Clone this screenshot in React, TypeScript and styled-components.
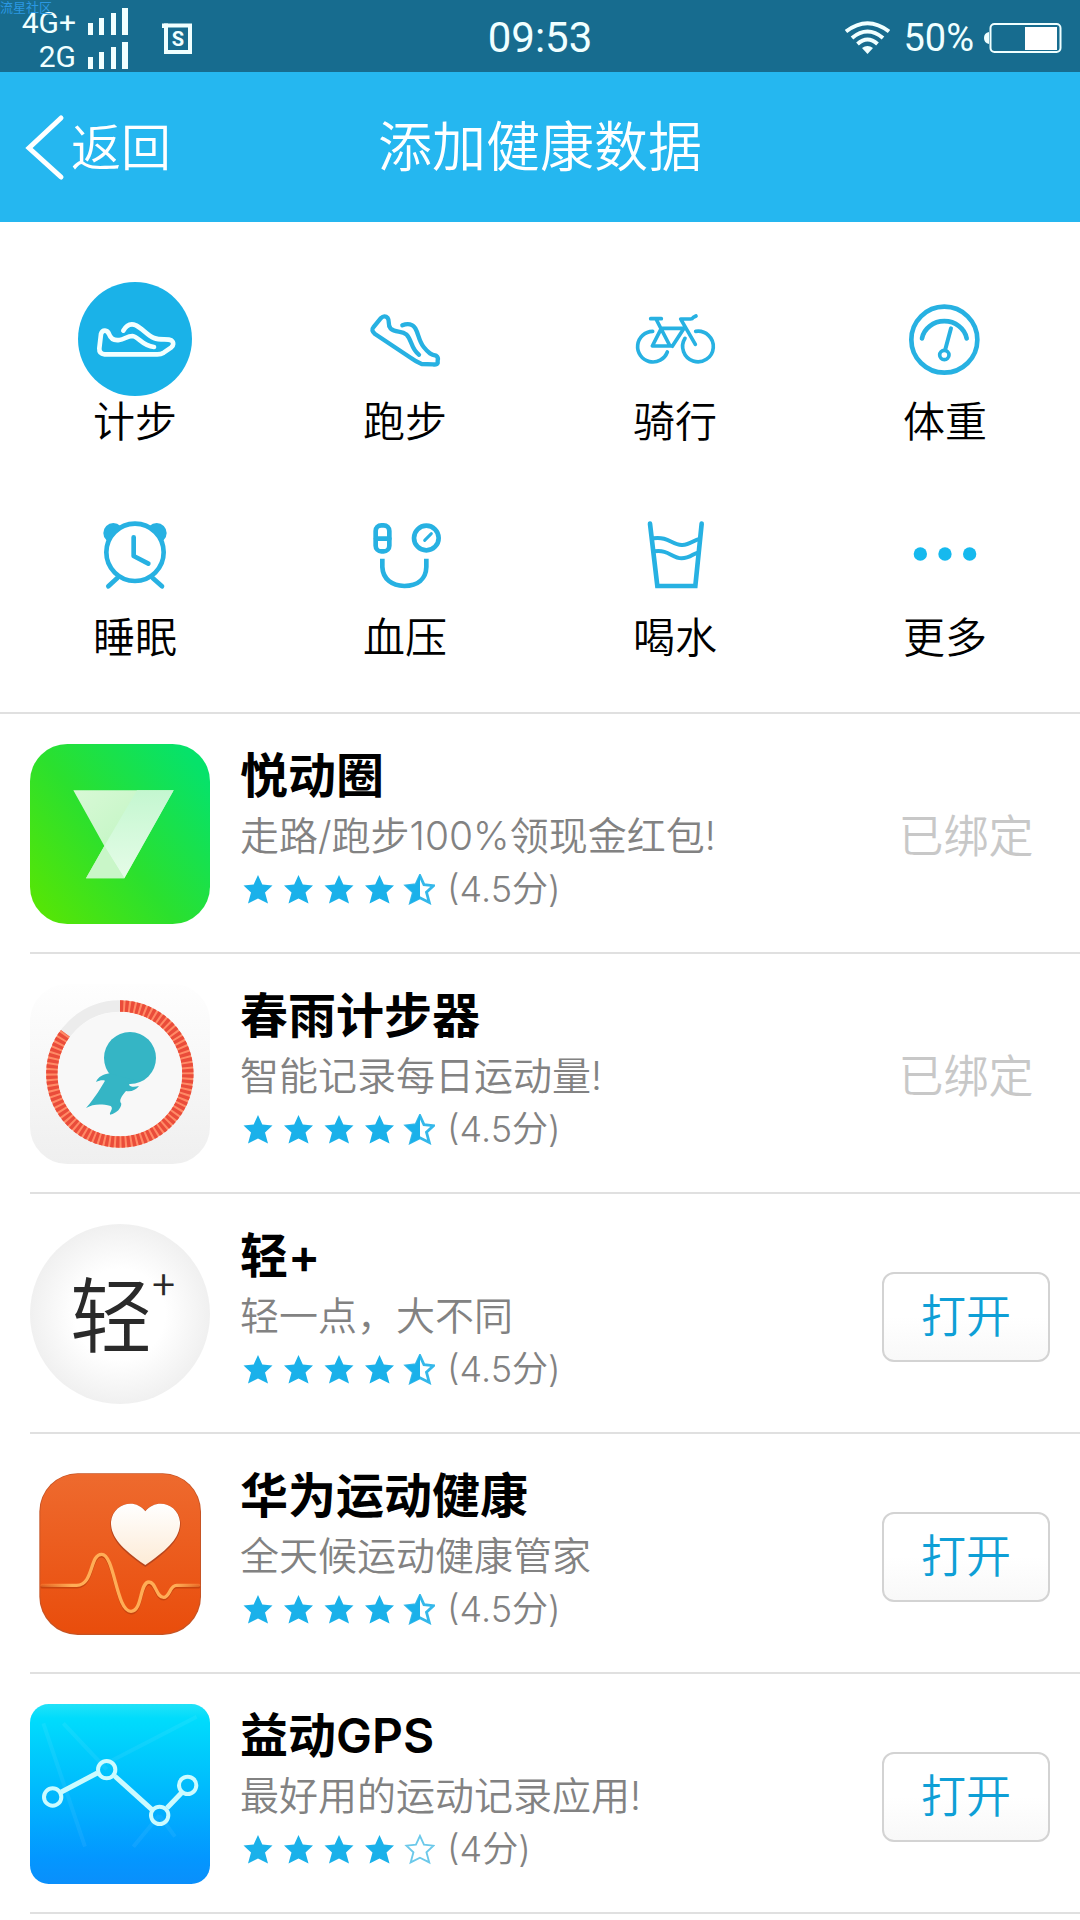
import React from "react";
import styled, { createGlobalStyle } from "styled-components";

const GlobalStyle = createGlobalStyle`
  * { box-sizing: border-box; }
  body {
    margin: 0;
    background: #fff;
    font-family: Inter, "Noto Sans CJK SC", sans-serif;
    font-weight: 350;
    color: #000;
  }
  button { font: inherit; cursor: pointer; }
`;

const Page = styled.div`
  position: relative;
  display: flex;
  flex-direction: column;
`;

const Watermark = styled.span`
  position: absolute;
  top: 0;
  left: 0;
  font-size: 13px;
  line-height: 14px;
  font-weight: 400;
  color: #2b98e2;
`;

const StatusBar = styled.div`
  display: grid;
  grid-template-columns: 1fr auto 1fr;
  align-items: center;
  height: 72px;
  padding: 3px 18px 0;
  background: #176c8f;
  color: #f0ffff;
  font-family: Roboto, sans-serif;
  font-weight: 400;
`;

const StatusSide = styled.div<{ $end?: boolean }>`
  display: flex;
  align-items: center;
  justify-content: ${(p) => (p.$end ? "flex-end" : "flex-start")};
`;

const Networks = styled.div`
  display: grid;
  grid-template-columns: 58px 40px;
  column-gap: 12px;
  row-gap: 4px;
  align-items: end;
  justify-items: end;
  margin-right: 34px;
  padding-top: 4px;
  font-size: 30px;
  line-height: 30px;
`;

const Clock = styled.time`
  font-size: 42px;
  line-height: 48px;
`;

const Percent = styled.span`
  margin: 0 10px 0 13px;
  font-size: 38px;
  line-height: 48px;
`;

const Header = styled.header`
  display: grid;
  grid-template-columns: 1fr auto 1fr;
  align-items: center;
  height: 150px;
  padding: 2px 24px 0;
  background: #25b7f0;
  color: #fff;
`;

const BackButton = styled.button`
  display: flex;
  align-items: center;
  gap: 5px;
  justify-self: start;
  padding: 0;
  border: 0;
  background: none;
  color: inherit;
  font-size: 50px;
  line-height: 72px;
`;

const Title = styled.h1`
  margin: 0;
  font-size: 54px;
  line-height: 72px;
  font-weight: inherit;
`;

const Categories = styled.nav`
  display: grid;
  grid-template-columns: repeat(4, 1fr);
  row-gap: 50px;
  padding: 60px 0 48px;
  border-bottom: 2px solid #e0e0e0;
`;

const Category = styled.button`
  display: flex;
  flex-direction: column;
  align-items: center;
  padding: 0;
  border: 0;
  background: none;
  color: #000;
  font-size: 42px;
  line-height: 52px;
`;

const CategoryDisc = styled.span<{ $active?: boolean }>`
  display: block;
  width: 114px;
  height: 114px;
  border-radius: 50%;
  background: ${(p) => (p.$active ? "#1ab2e8" : "transparent")};
  color: ${(p) => (p.$active ? "#f2ffff" : "#27b1e2")};

  svg {
    display: block;
    width: 100%;
    height: 100%;
    fill: none;
    stroke: currentColor;
    stroke-width: 14;
    stroke-linecap: round;
    stroke-linejoin: round;
  }
`;

const AppList = styled.ul`
  margin: 0;
  padding: 0;
  list-style: none;
`;

const AppRow = styled.li`
  display: flex;
  align-items: flex-start;
  gap: 30px;
  margin-left: 30px;
  padding: 30px 30px 22px 0;
  border-bottom: 2px solid #e0e0e0;
`;

const AppIcon = styled.svg`
  display: block;
  flex: none;
  width: 180px;
  height: 180px;
`;

const AppInfo = styled.div`
  flex: 1;
  min-width: 0;
  min-height: 186px;
`;

const AppName = styled.h2`
  margin: 0;
  font-size: 48px;
  line-height: 64px;
  font-weight: 600;
`;

const AppText = styled.p`
  margin: 0;
  font-size: 39px;
  line-height: 56px;
  color: #828282;
`;

const Rating = styled.div`
  display: flex;
  align-items: center;
  gap: 12px;
  padding-left: 3px;
  font-size: 36px;
  line-height: 50px;
  color: #828282;
`;

const Action = styled.div`
  display: flex;
  justify-content: center;
  align-self: center;
  width: 168px;
  font-size: 45px;
  line-height: 64px;
  color: #c8c8c8;
`;

const OpenButton = styled.button`
  width: 100%;
  height: 90px;
  padding: 0;
  border: 2px solid #d3d3d3;
  border-radius: 12px;
  background: linear-gradient(#fff 50%, #f8f8f8);
  color: #0e9fd6;
`;

const SignalBars = () => (
  <svg width="40" height="30" viewBox="0 0 40 30" fill="#f0ffff" aria-hidden="true">
    <rect x="0" y="15" width="5" height="12" />
    <rect x="11" y="10" width="5" height="17" />
    <rect x="23" y="5" width="5" height="22" />
    <rect x="34" y="0" width="6" height="27" />
  </svg>
);

const SimIcon = () => (
  <svg width="30" height="32" viewBox="0 0 30 32" aria-hidden="true">
    <path d="M4 3.5H28V30H4Z" fill="none" stroke="#f0ffff" strokeWidth="4" />
    <path d="M0 1.5H6V6H0Z" fill="#f0ffff" />
    <text x="16" y="24" textAnchor="middle" fill="#f0ffff" fontSize="20" fontWeight="700" fontFamily="Roboto, sans-serif">S</text>
  </svg>
);

const WifiIcon = () => (
  <svg width="45" height="33" viewBox="0 0 45 33" fill="none" stroke="#f0ffff" strokeWidth="4" aria-hidden="true">
    <path d="M1 10.5Q22.500 -6 44 10.500" />
    <path d="M7 17Q22.500 4 38 17" />
    <path d="M12.500 23Q22.500 14 32.500 23" />
    <path d="M17 27Q22.500 23 28 27L22.500 33Z" fill="#f0ffff" stroke="none" />
  </svg>
);

const BatteryIcon = () => (
  <svg width="78" height="30" viewBox="0 0 78 30" aria-hidden="true">
    <path d="M5 9Q0 10 0 15T5 21Z" fill="#f0ffff" />
    <rect x="6.500" y="1" width="70" height="28" rx="4" fill="none" stroke="#f0ffff" strokeWidth="2" />
    <rect x="41" y="4" width="32" height="23" fill="#fff" />
  </svg>
);

const BackIcon = () => (
  <svg width="42" height="68" viewBox="0 0 42 68" fill="none" stroke="#fff" strokeWidth="5" strokeLinecap="round" aria-hidden="true">
    <path d="M37 4L5 34L37 63" />
  </svg>
);

const categories = [
  {
    label: "计步",
    active: true,
    view: "54 66 342 342",
    art: (
      <>
        <path d="M190 212C200 194 214 190 228 196C248 206 262 226 282 234C302 242 322 235 334 241C342 247 341 257 333 263L311 278Q303 283 292 283H134Q117 281 118 265L123 222C128 207 142 210 147 222C152 236 164 242 178 240C193 239 201 228 217 228C238 231 245 257 282 261" />
      </>
    ),
  },
  {
    label: "跑步",
    view: "864 66 342 342",
    art: (
      <path
        strokeWidth="13"
        d="M1027 196C1043 189 1058 192 1066 205C1076 222 1076 242 1091 261C1106 280 1114 284 1128 287Q1136 292 1133 302V309Q1130 315 1119 313L1085 312Q1068 305 1053 294L945 222Q932 211 940 202L962 175Q974 164 983 174C991 185 981 193 992 206C1007 219 1024 211 1040 224C1056 240 1053 267 1077 284"
      />
    ),
  },
  {
    label: "骑行",
    view: "174 66 342 342",
    art: (
      <g strokeWidth="11">
        <path d="M278 214A46 46 0 1 0 322 276" />
        <path d="M375 235A46 46 0 1 0 407 214" />
        <path d="M272 176H304M288 177L330 258H277L304 205H372L337 259M362 177H392Q397 177 400 172L408 168M363 179L406 253" />
      </g>
    ),
  },
  {
    label: "体重",
    view: "984 66 342 342",
    art: (
      <>
        <circle cx="1153" cy="239" r="99" />
        <path d="M1086 235A68 62 0 0 1 1220 235" />
        <circle cx="1153" cy="285" r="14" strokeWidth="11" />
        <path d="M1156 268L1173 205" strokeWidth="12" />
      </>
    ),
  },
  {
    label: "睡眠",
    view: "54 24 342 342",
    art: (
      <>
        <g fill="currentColor" stroke="none">
          <circle cx="160" cy="129" r="30" />
          <circle cx="290" cy="129" r="30" />
        </g>
        <circle cx="225" cy="187" r="86" fill="#fff" />
        <path d="M221 142V198L265 221M172 264L145 289M278 264L306 289" />
      </>
    ),
  },
  {
    label: "血压",
    view: "864 24 342 342",
    art: (
      <>
        <rect x="947" y="106" width="41" height="78" rx="17" />
        <path d="M948 146H988" />
        <circle cx="1099" cy="144" r="37" />
        <path d="M1094 151L1114 131" strokeWidth="9" />
        <path d="M967 206V231C969 268 996 287 1033 288C1073 287 1098 267 1099 231V206" strokeLinecap="butt" />
      </>
    ),
  },
  {
    label: "喝水",
    view: "174 24 342 342",
    art: (
      <>
        <path d="M270 101L292 288H406L425 101" strokeLinejoin="miter" />
        <path d="M280 145C325 139 335 164 365 165C390 166 401 150 418 147M283 184C326 178 335 204 365 205C389 205 401 190 414 188" strokeWidth="12" />
      </>
    ),
  },
  {
    label: "更多",
    view: "984 24 342 342",
    art: (
      <g fill="#16b9ee" stroke="none">
        <circle cx="1081" cy="192" r="20" />
        <circle cx="1155" cy="192" r="20" />
        <circle cx="1229" cy="192" r="20" />
      </g>
    ),
  },
];

const YuedongIcon = () => (
  <AppIcon viewBox="90 72 540 540" aria-hidden="true">
    <defs>
      <linearGradient id="yd-bg" x1="0" y1="1" x2="1" y2="0.200">
        <stop offset="0" stopColor="#5ce600" />
        <stop offset="0.500" stopColor="#2be02e" />
        <stop offset="1" stopColor="#06e26a" />
      </linearGradient>
      <linearGradient id="yd-wing" x1="0" y1="0" x2="1" y2="1">
        <stop offset="0" stopColor="#d8f9d6" />
        <stop offset="1" stopColor="#b5f3b8" />
      </linearGradient>
      <linearGradient id="yd-blade" x1="0" y1="0" x2="0" y2="1">
        <stop offset="0" stopColor="#c4f7d0" />
        <stop offset="1" stopColor="#e6fce8" />
      </linearGradient>
    </defs>
    <rect x="90" y="72" width="540" height="540" rx="112" fill="url(#yd-bg)" />
    <path d="M220 211H521L373 475H258L313 378Z" fill="url(#yd-wing)" />
    <path d="M411 211H521L373 475L313 378Z" fill="url(#yd-blade)" />
    <path d="M313 378L373 475H258Z" fill="#c9f6c8" />
  </AppIcon>
);

const ChunyuIcon = () => (
  <AppIcon viewBox="90 72 540 540" aria-hidden="true">
    <defs>
      <linearGradient id="cy-bg" x1="0" y1="0" x2="0" y2="1">
        <stop offset="0" stopColor="#fefefe" />
        <stop offset="1" stopColor="#efefef" />
      </linearGradient>
    </defs>
    <rect x="90" y="72" width="540" height="540" rx="112" fill="url(#cy-bg)" />
    <g fill="none" strokeWidth="34">
      <circle cx="360" cy="342" r="204" stroke="#ececec" />
      <path d="M360 138A204 204 0 1 1 196 220" stroke="#ff8a66" />
      <path d="M360 138A204 204 0 1 1 196 220" stroke="#ea4c3a" strokeDasharray="10 6" />
    </g>
    <circle cx="360" cy="342" r="186" fill="#f8f8f8" />
    <g fill="#35b5c5">
      <circle cx="390" cy="294" r="78" />
      <path d="M328 340C310 343 295 350 288 366C298 361 308 359 315 362C302 383 290 407 258 444C280 432 302 431 332 438C342 447 328 455 330 464C353 458 363 444 364 431C355 421 366 408 378 393C394 396 408 390 417 378C402 382 391 381 387 374L400 360Z" />
    </g>
  </AppIcon>
);

const QingIcon = () => (
  <AppIcon viewBox="0 0 180 180" aria-hidden="true">
    <defs>
      <radialGradient id="qj-bg">
        <stop offset="0.500" stopColor="#ffffff" />
        <stop offset="1" stopColor="#f0f0f0" />
      </radialGradient>
    </defs>
    <circle cx="90" cy="90" r="90" fill="url(#qj-bg)" />
    <g fill="#2a2a2a" fontFamily="'Noto Sans CJK SC', sans-serif">
      <text x="40" y="122" fontSize="82">轻</text>
      <text x="122" y="76" fontSize="42">+</text>
    </g>
  </AppIcon>
);

const HuaweiIcon = () => (
  <AppIcon viewBox="90 72 540 540" aria-hidden="true">
    <defs>
      <linearGradient id="hw-bg" x1="0" y1="0" x2="0" y2="1">
        <stop offset="0" stopColor="#ee6a2e" />
        <stop offset="1" stopColor="#e94d0c" />
      </linearGradient>
      <linearGradient id="hw-heart" x1="0" y1="0" x2="0" y2="1">
        <stop offset="0" stopColor="#ffffff" />
        <stop offset="1" stopColor="#fdebd6" />
      </linearGradient>
      <linearGradient id="hw-line" gradientUnits="userSpaceOnUse" x1="120" y1="0" x2="600" y2="0">
        <stop offset="0" stopColor="#ffad56" stopOpacity="0.200" />
        <stop offset="0.200" stopColor="#ffad56" />
        <stop offset="0.850" stopColor="#ffad56" />
        <stop offset="1" stopColor="#ffad56" stopOpacity="0.300" />
      </linearGradient>
    </defs>
    <rect x="118" y="100" width="485" height="485" rx="115" fill="#c65323" />
    <rect x="121" y="102" width="479" height="479" rx="112" fill="url(#hw-bg)" />
    <path d="M436 381C355 326 330 290 331 248C335 192 404 172 436 212C470 172 538 192 542 248C543 291 516 327 436 381Z" fill="#b8461d" />
    <path d="M436 375C358 322 332 286 333 246C338 190 406 172 436 214C468 172 535 190 540 246C541 288 514 322 436 375Z" fill="url(#hw-heart)" />
    <g fill="none" strokeLinecap="round">
      <path d="M126 441H230C282 440 268 348 305 348C344 348 348 519 393 519C428 519 418 431 447 431C468 431 468 477 491 477C510 477 508 441 530 441H596" stroke="#c8440f" strokeWidth="9" />
      <path d="M126 436H230C282 435 268 343 305 343C344 343 348 514 393 514C428 514 418 426 447 426C468 426 468 472 491 472C510 472 508 436 530 436H596" stroke="url(#hw-line)" strokeWidth="10" />
    </g>
  </AppIcon>
);

const YidongIcon = () => (
  <AppIcon viewBox="90 72 540 540" aria-hidden="true">
    <defs>
      <linearGradient id="gps-bg" x1="0" y1="0" x2="0" y2="1">
        <stop offset="0" stopColor="#22e2f8" />
        <stop offset="0.080" stopColor="#00dcfc" />
        <stop offset="0.500" stopColor="#00b8fd" />
        <stop offset="0.850" stopColor="#0397ff" />
        <stop offset="1" stopColor="#0a8ffb" />
      </linearGradient>
    </defs>
    <rect x="90" y="72" width="540" height="540" rx="56" fill="url(#gps-bg)" />
    <path d="M130 130L255 500M190 130L320 268M320 250L590 110M478 406L400 500M478 406L525 470" stroke="#fff" strokeOpacity="0.060" strokeWidth="12" />
    <g fill="none" stroke="#ccfbff">
      <path d="M184 336L292 279M344 288L455 388M501 384L545 338" strokeWidth="15" />
      <g strokeWidth="12">
        <circle cx="158" cy="351" r="26" />
        <circle cx="320" cy="269" r="26" />
        <circle cx="479" cy="406" r="26" />
        <circle cx="563" cy="316" r="26" />
      </g>
    </g>
  </AppIcon>
);

const STAR = "M15 1L19.300 10.400L29.500 11.500L22 18.500L25 29.500L15 24.500L5 29.500L8 18.500L0.500 11.500L10.700 10.400Z";
const HALF_STAR = "M15 1V24.500L5 29.500L8 18.500L0.500 11.500L10.700 10.400Z";

const Stars = ({ score }: { score: number }) => (
  <svg width="192" height="31" viewBox="0 0 192 31" role="img" aria-label={`${score}`}>
    {[0, 1, 2, 3, 4].map((i) => {
      const full = score >= i + 1;
      const half = !full && score > i;
      return (
        <g key={i} transform={`translate(${i * 40.5} 0)`}>
          {full ? (
            <path d={STAR} fill="#1ab1ea" />
          ) : (
            <>
              <path
                d={STAR}
                transform="translate(1 1) scale(0.930)"
                fill="none"
                stroke={half ? "#35b8ea" : "#6cc9ea"}
                strokeWidth={half ? 3 : 2}
              />
              {half && <path d={HALF_STAR} fill="#1ab1ea" />}
            </>
          )}
        </g>
      );
    })}
  </svg>
);

const apps = [
  { name: "悦动圈", text: "走路/跑步100%领现金红包!", score: 4.5, bound: true, Icon: YuedongIcon },
  { name: "春雨计步器", text: "智能记录每日运动量!", score: 4.5, bound: true, Icon: ChunyuIcon },
  { name: "轻+", text: "轻一点，大不同", score: 4.5, bound: false, Icon: QingIcon },
  { name: "华为运动健康", text: "全天候运动健康管家", score: 4.5, bound: false, Icon: HuaweiIcon },
  { name: "益动GPS", text: "最好用的运动记录应用!", score: 4, bound: false, Icon: YidongIcon },
];

export default function App() {
  return (
    <Page lang="zh-CN">
      <GlobalStyle />
      <StatusBar>
        <StatusSide>
          <Networks>
            <span>4G+</span>
            <SignalBars />
            <span>2G</span>
            <SignalBars />
          </Networks>
          <SimIcon />
        </StatusSide>
        <Clock>09:53</Clock>
        <StatusSide $end>
          <WifiIcon />
          <Percent>50%</Percent>
          <BatteryIcon />
        </StatusSide>
      </StatusBar>
      <Watermark>流星社区</Watermark>
      <Header>
        <BackButton type="button">
          <BackIcon />
          返回
        </BackButton>
        <Title>添加健康数据</Title>
      </Header>
      <main>
        <Categories>
          {categories.map((c) => (
            <Category key={c.label} type="button" aria-pressed={!!c.active}>
              <CategoryDisc $active={c.active}>
                <svg viewBox={c.view} aria-hidden="true">{c.art}</svg>
              </CategoryDisc>
              {c.label}
            </Category>
          ))}
        </Categories>
        <AppList>
          {apps.map(({ name, text, score, bound, Icon }) => (
            <AppRow key={name}>
              <Icon />
              <AppInfo>
                <AppName>{name}</AppName>
                <AppText>{text}</AppText>
                <Rating>
                  <Stars score={score} />
                  <span>({score}分)</span>
                </Rating>
              </AppInfo>
              <Action>{bound ? <span>已绑定</span> : <OpenButton type="button">打开</OpenButton>}</Action>
            </AppRow>
          ))}
        </AppList>
      </main>
    </Page>
  );
}
